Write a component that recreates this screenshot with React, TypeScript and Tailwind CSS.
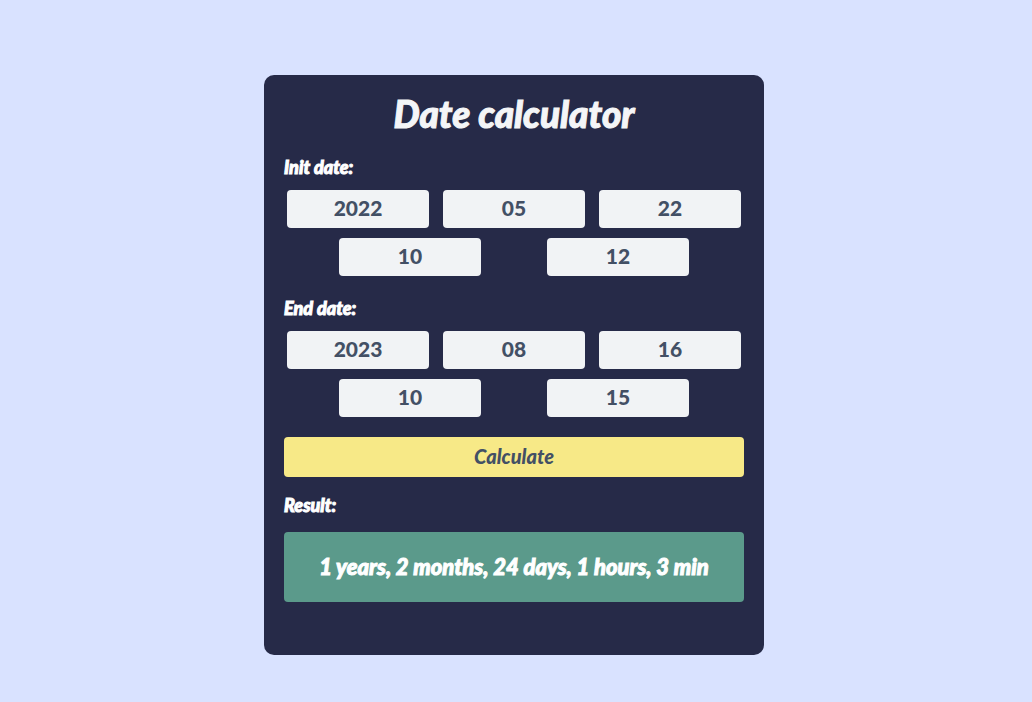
import { useState } from "react";

type Field = { name: string; value: string };

const initFields: Field[] = [
  { name: "year", value: "2022" },
  { name: "month", value: "05" },
  { name: "day", value: "22" },
  { name: "hour", value: "10" },
  { name: "minute", value: "12" },
];

const endFields: Field[] = [
  { name: "year", value: "2023" },
  { name: "month", value: "08" },
  { name: "day", value: "16" },
  { name: "hour", value: "10" },
  { name: "minute", value: "15" },
];

function DateInput({ group, field }: { group: string; field: Field }) {
  const [value, setValue] = useState(field.value);
  return (
    <input
      type="text"
      inputMode="numeric"
      aria-label={`${group} ${field.name}`}
      value={value}
      onChange={(e) => setValue(e.target.value)}
      className="h-[38px] w-[142px] min-w-0 rounded bg-[#f1f3f5] pb-1 text-center text-[21px] font-black text-[#435065] outline-none"
    />
  );
}

function DateGroup({ label, fields }: { label: string; fields: Field[] }) {
  return (
    <fieldset>
      <legend className="text-lg leading-6 font-black italic [-webkit-text-stroke:1px]">{label}</legend>
      <div className="mt-[11px] flex justify-between gap-2 px-[3px]">
        {fields.slice(0, 3).map((f) => (
          <DateInput key={f.name} group={label} field={f} />
        ))}
      </div>
      <div className="mt-2.5 flex justify-between gap-2 px-[55px]">
        {fields.slice(3).map((f) => (
          <DateInput key={f.name} group={label} field={f} />
        ))}
      </div>
    </fieldset>
  );
}

export default function App() {
  return (
    <main className="flex min-h-screen items-start justify-center bg-[#d9e2ff] pt-[75px] pr-1 pb-[47px] font-['Lato',sans-serif] text-white">
      <section className="w-full max-w-[500px] rounded-[10px] bg-[#262a48] px-5 pt-4 pb-[53px]">
        <h1 className="text-center text-[37px] leading-[46px] font-black text-[#f4f5f7] italic [-webkit-text-stroke:1px]">
          Date calculator
        </h1>
        <form className="mt-[18px] flex flex-col" onSubmit={(e) => e.preventDefault()}>
          <div className="flex flex-col gap-5">
            <DateGroup label="Init date:" fields={initFields} />
            <DateGroup label="End date:" fields={endFields} />
          </div>
          <button
            type="submit"
            className="mt-5 h-10 rounded bg-[#f7e987] pb-0.5 text-xl font-black text-[#435065] italic"
          >
            Calculate
          </button>
        </form>
        <h2 className="mt-4 text-lg leading-6 font-black italic [-webkit-text-stroke:1px]">Result:</h2>
        <output className="mt-[15px] flex min-h-[70px] items-center justify-center rounded bg-[#5b9a8b] pb-0.5 text-center text-[22px] font-black italic [-webkit-text-stroke:1px]">
          1 years, 2 months, 24 days, 1 hours, 3 min
        </output>
      </section>
    </main>
  );
}
